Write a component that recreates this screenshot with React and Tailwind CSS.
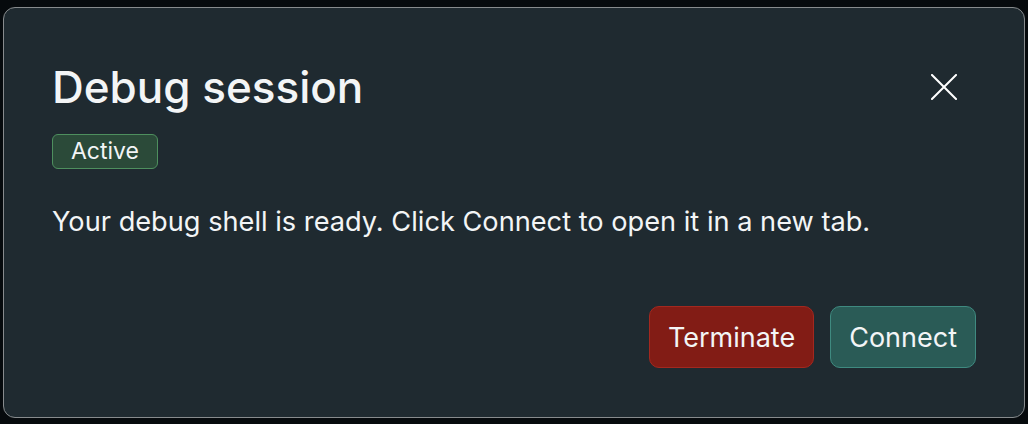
import React from "react";

export default function App() {
  return (
    <div className="w-full h-[424px] bg-[#060a0d] pt-[7px] px-[3px] font-['Inter','Noto_Sans',sans-serif] text-[#f3f5f6]">
      <div className="h-[411px] rounded-[12px] border-[1.5px] border-[#878b8d] bg-[#1f2a30] flex flex-col px-[48px] pt-[54px] pb-[49px]">
        <div className="flex items-center justify-between">
          <h2 className="text-[44px] leading-[50px] font-medium">Debug session</h2>
          <button className="w-[40px] h-[40px] mr-[12px] flex items-center justify-center text-white">
            <svg width="26" height="26" viewBox="0 0 26 26" fill="none" stroke="currentColor" strokeWidth="2" strokeLinecap="square">
              <path d="M1 1L25 25M25 1L1 25" />
            </svg>
          </button>
        </div>
        <div className="mt-[22px] flex">
          <span className="h-[35px] px-[18px] flex items-center rounded-[6px] border-[1.5px] border-[#4e8f5e] bg-[#2b4a39] text-[23px] leading-none">Active</span>
        </div>
        <p className="mt-[37px] text-[27.2px] leading-[32px]">Your debug shell is ready. Click Connect to open it in a new tab.</p>
        <div className="mt-auto flex justify-end gap-[16px]">
          <button className="h-[62px] px-[18px] rounded-[10px] border-[1.5px] border-[#a3281f] bg-[#821c15] text-[27px] leading-none">Terminate</button>
          <button className="h-[62px] px-[18px] rounded-[10px] border-[1.5px] border-[#3f8a80] bg-[#2a5b56] text-[27px] leading-none">Connect</button>
        </div>
      </div>
    </div>
  );
}
